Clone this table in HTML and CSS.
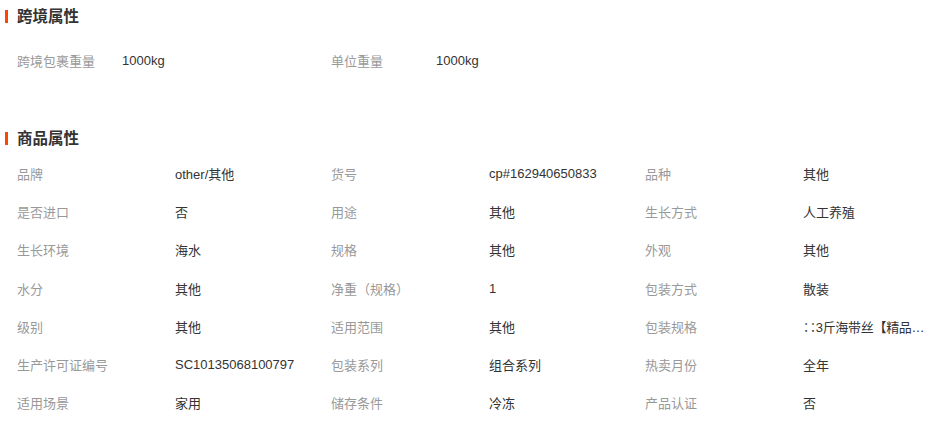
FILE: index.html
```html
<!DOCTYPE html>
<html lang="zh">
<head>
<meta charset="utf-8">
<link rel="stylesheet" href="styles.css">
</head>
<body>
<section class="section">
  <h2 class="title">跨境属性</h2>
  <div class="grid grid-cross">
    <div class="item"><span class="label label-short">跨境包裹重量</span><span class="value">1000kg</span></div>
    <div class="item"><span class="label label-short">单位重量</span><span class="value">1000kg</span></div>
  </div>
</section>
<section class="section section-product">
  <h2 class="title">商品属性</h2>
  <div class="grid">
    <div class="item"><span class="label">品牌</span><span class="value">other/其他</span></div>
    <div class="item"><span class="label">货号</span><span class="value">cp#162940650833</span></div>
    <div class="item"><span class="label">品种</span><span class="value">其他</span></div>
    <div class="item"><span class="label">是否进口</span><span class="value">否</span></div>
    <div class="item"><span class="label">用途</span><span class="value">其他</span></div>
    <div class="item"><span class="label">生长方式</span><span class="value">人工养殖</span></div>
    <div class="item"><span class="label">生长环境</span><span class="value">海水</span></div>
    <div class="item"><span class="label">规格</span><span class="value">其他</span></div>
    <div class="item"><span class="label">外观</span><span class="value">其他</span></div>
    <div class="item"><span class="label">水分</span><span class="value">其他</span></div>
    <div class="item"><span class="label">净重（规格）</span><span class="value">1</span></div>
    <div class="item"><span class="label">包装方式</span><span class="value">散装</span></div>
    <div class="item"><span class="label">级别</span><span class="value">其他</span></div>
    <div class="item"><span class="label">适用范围</span><span class="value">其他</span></div>
    <div class="item"><span class="label">包装规格</span><span class="value value-clip">∷3斤海带丝【精品海带丝】</span></div>
    <div class="item"><span class="label">生产许可证编号</span><span class="value">SC10135068100797</span></div>
    <div class="item"><span class="label">包装系列</span><span class="value">组合系列</span></div>
    <div class="item"><span class="label">热卖月份</span><span class="value">全年</span></div>
    <div class="item"><span class="label">适用场景</span><span class="value">家用</span></div>
    <div class="item"><span class="label">储存条件</span><span class="value">冷冻</span></div>
    <div class="item"><span class="label">产品认证</span><span class="value">否</span></div>
  </div>
</section>
</body>
</html>
```
FILE: styles.css
```css
html, body {
  margin: 0;
  padding: 0;
  background: #fff;
}
body {
  width: 944px;
  overflow: hidden;
  font-family: "Liberation Sans", "Noto Sans CJK SC", sans-serif;
  font-size: 13px;
  color: #333;
}
.section {
  display: flex;
  flex-direction: column;
}
.section-product {
  margin-top: 43px;
}
.title {
  margin: 0;
  height: 32px;
  line-height: 33px;
  padding-left: 17px;
  position: relative;
  font-size: 15.5px;
  font-weight: bold;
  color: #333;
}
.title::before {
  content: "";
  position: absolute;
  left: 5px;
  top: 10px;
  width: 3px;
  height: 13px;
  background: #ff4400;
}
.grid {
  display: grid;
  grid-template-columns: 314px 314px 299px;
  grid-auto-rows: 38.3px;
  padding-left: 17px;
  margin-top: 0;
}
.grid-cross {
  margin-top: 9px;
  grid-auto-rows: 38px;
}
.item {
  display: flex;
  align-items: center;
  min-width: 0;
}
.label {
  flex: 0 0 158px;
  color: #999;
  white-space: nowrap;
}
.label-short {
  flex-basis: 105px;
}
.value {
  color: #333;
  white-space: nowrap;
  overflow: hidden;
  text-overflow: ellipsis;
  max-width: 126px;
}
.value-clip {
  letter-spacing: -0.3px;
}
```
